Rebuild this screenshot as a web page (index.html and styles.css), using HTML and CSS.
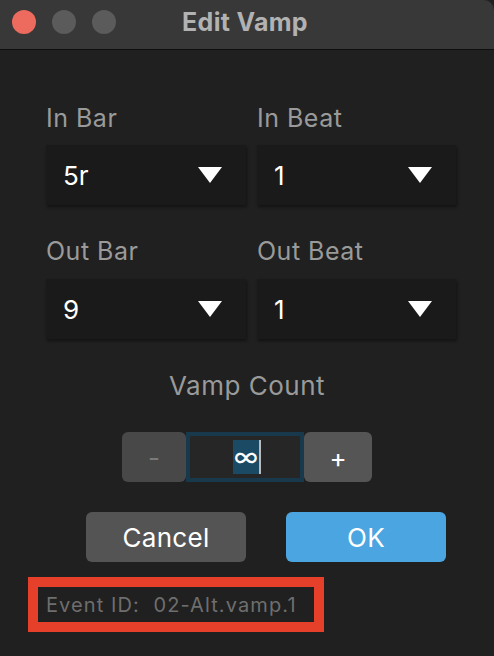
FILE: index.html
```html
<!DOCTYPE html>
<html>
<head>
<meta charset="utf-8">
<link rel="stylesheet" href="styles.css">
</head>
<body>
<div class="window">
  <div class="titlebar">
    <div class="lights">
      <span class="light red"></span>
      <span class="light gray"></span>
      <span class="light gray"></span>
    </div>
    <div class="title">Edit Vamp</div>
  </div>
  <div class="content">
    <div class="grid">
      <div class="field">
        <div class="label">In Bar</div>
        <div class="select"><span>5r</span><span class="tri"></span></div>
      </div>
      <div class="field">
        <div class="label">In Beat</div>
        <div class="select"><span>1</span><span class="tri"></span></div>
      </div>
      <div class="field row2">
        <div class="label">Out Bar</div>
        <div class="select"><span>9</span><span class="tri"></span></div>
      </div>
      <div class="field row2">
        <div class="label">Out Beat</div>
        <div class="select"><span>1</span><span class="tri"></span></div>
      </div>
    </div>
    <div class="vamp-label">Vamp Count</div>
    <div class="stepper">
      <div class="step minus">-</div>
      <div class="count"><span class="sel">∞</span><span class="caret"></span></div>
      <div class="step plus">+</div>
    </div>
    <div class="buttons">
      <div class="btn cancel">Cancel</div>
      <div class="btn ok">OK</div>
    </div>
    <div class="event">Event ID:&nbsp; 02-Alt.vamp.1</div>
  </div>
</div>
</body>
</html>
```
FILE: styles.css
```css
html, body {
  margin: 0;
  padding: 0;
  background: #202020;
}
body {
  font-family: Inter, "Open Sans", sans-serif;
  width: 494px;
  height: 656px;
  overflow: hidden;
}
.window {
  width: 494px;
  height: 656px;
  background: #202020;
}
.titlebar {
  height: 49px;
  background: #383838;
  border-bottom: 1px solid #0e0e0e;
  border-top-right-radius: 10px;
  position: relative;
  display: flex;
  align-items: center;
  justify-content: center;
}
.lights {
  position: absolute;
  left: 12px;
  top: 10px;
  display: flex;
  gap: 16px;
}
.light {
  width: 24px;
  height: 24px;
  border-radius: 50%;
  display: block;
}
.light.red { background: #ec6a5e; }
.light.gray { background: #5b5b5b; }
.title {
  color: #b2b2b2;
  font-weight: 700;
  font-size: 25px;
  letter-spacing: 0.3px;
  margin-left: -4px;
  margin-top: -6px;
}
.content {
  padding: 0 0 0 46px;
}
.grid {
  display: grid;
  grid-template-columns: 200px 199px;
  column-gap: 11px;
  padding-top: 54px;
}
.label {
  color: #9a9a9a;
  font-size: 25px;
  letter-spacing: 0.5px;
  line-height: 28px;
  height: 28px;
  margin-bottom: 13px;
}
.field.row2 { margin-top: 32px; }
.field.row2 .label { margin-bottom: 14px; }
.select {
  height: 60px;
  background: #1a1a1a;
  box-shadow: 1px 2px 3px rgba(0,0,0,0.45);
  display: flex;
  align-items: center;
  justify-content: space-between;
  padding: 0 24px 0 17px;
  color: #ffffff;
  font-size: 26px;
}
.tri {
  width: 0;
  height: 0;
  border-left: 12px solid transparent;
  border-right: 12px solid transparent;
  border-top: 16px solid #ffffff;
}
.vamp-label {
  color: #9a9a9a;
  font-size: 26px;
  letter-spacing: 0.5px;
  line-height: 28px;
  text-align: center;
  width: 402px;
  margin-top: 33px;
}
.stepper {
  display: flex;
  margin-top: 32px;
  margin-left: 76px;
  height: 50px;
}
.step {
  border-radius: 6px;
  display: flex;
  align-items: center;
  justify-content: center;
  font-size: 26px;
}
.step.minus {
  width: 64px;
  color: #7a7a7a;
  background: #484848;
}
.step.plus {
  width: 68px;
  color: #ffffff;
  background: #555555;
}
.count {
  background: #262626;
  border: 4px solid #17394b;
  box-sizing: border-box;
  width: 118px;
  display: flex;
  align-items: center;
  justify-content: center;
  color: #ffffff;
  font-size: 26px;
}
.sel {
  background: #1b4a64;
  height: 34px;
  line-height: 34px;
  padding: 0 1px;
  margin-left: 4px;
}
.caret {
  width: 2px;
  height: 34px;
  background: #bbbbbb;
}
.buttons {
  display: flex;
  gap: 40px;
  margin-top: 30px;
  margin-left: 40px;
}
.btn {
  width: 160px;
  height: 50px;
  border-radius: 6px;
  display: flex;
  align-items: center;
  justify-content: center;
  color: #ffffff;
  font-size: 26px;
  letter-spacing: 0.3px;
}
.btn.cancel { background: #545454; }
.btn.ok { background: #4ba5e0; }
.event {
  margin-top: 15px;
  margin-left: -18px;
  width: 296px;
  height: 55px;
  box-sizing: border-box;
  border: 10px solid #e6402a;
  color: #6e6e6e;
  font-size: 20px;
  letter-spacing: 1.1px;
  display: flex;
  align-items: center;
  padding-left: 8px;
}
```
